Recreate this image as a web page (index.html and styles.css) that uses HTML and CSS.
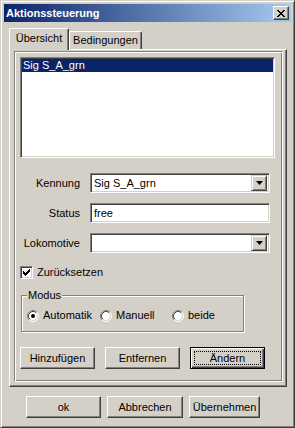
FILE: index.html
```html
<!DOCTYPE html>
<html lang="de">
<head>
  <meta charset="UTF-8" />
  <title>Aktionssteuerung</title>
  <link rel="stylesheet" href="styles.css">
</head>
<body>
  <div class="window">
    <div class="titlebar">
      <span class="title">Aktionssteuerung</span>
      <div class="close-btn">
        <svg width="8" height="7" viewBox="0 0 8 7">
          <path d="M0 0h2v1H0zM6 0h2v1H6zM1 1h2v1H1zM5 1h2v1H5zM2 2h4v1H2zM3 3h2v1H3zM2 4h4v1H2zM1 5h2v1H1zM5 5h2v1H5zM0 6h2v1H0zM6 6h2v1H6z" fill="#000"/>
        </svg>
      </div>
    </div>

    <div class="dialog-body">
      <div class="tabs">
        <div class="tab active">Übersicht</div>
        <div class="tab">Bedingungen</div>
      </div>

      <div class="tab-panel">
        <div class="frame">
          <div class="listbox">
            <div class="list-item selected">Sig S_A_grn</div>
          </div>

          <div class="form">
            <span class="field-label">Kennung</span>
            <div class="combo">
              <span class="combo-value">Sig S_A_grn</span>
              <span class="combo-btn">
                <svg width="7" height="4" viewBox="0 0 7 4"><path d="M0 0h7L3.5 4z" fill="#000"/></svg>
              </span>
            </div>

            <span class="field-label">Status</span>
            <div class="textbox">free</div>

            <span class="field-label">Lokomotive</span>
            <div class="combo">
              <span class="combo-value"></span>
              <span class="combo-btn">
                <svg width="7" height="4" viewBox="0 0 7 4"><path d="M0 0h7L3.5 4z" fill="#000"/></svg>
              </span>
            </div>
          </div>

          <div class="check-row">
            <span class="checkbox">
              <svg width="7" height="7" viewBox="0 0 7 7">
                <path d="M6 0h1v1H6zM5 1h2v1H5zM0 2h1v1H0zM4 2h3v1H4zM0 3h2v1H0zM3 3h3v1H3zM0 4h5v1H0zM1 5h3v1H1zM2 6h1v1H2z" fill="#000"/>
              </svg>
            </span>
            <span>Zurücksetzen</span>
          </div>

          <div class="groupbox">
            <div class="group-title">Modus</div>
            <div class="radio-row">
              <span class="radio-opt opt-auto">
                <svg class="radio" width="12" height="12" viewBox="0 0 12 12">
                  <circle cx="6" cy="6" r="5" fill="#fff"/>
                  <path d="M2.11 9.89A5.5 5.5 0 0 1 9.89 2.11" fill="none" stroke="#808080"/>
                  <path d="M9.89 2.11A5.5 5.5 0 0 1 2.11 9.89" fill="none" stroke="#fff"/>
                  <path d="M2.82 9.18A4.5 4.5 0 0 1 9.18 2.82" fill="none" stroke="#404040"/>
                  <path d="M9.18 2.82A4.5 4.5 0 0 1 2.82 9.18" fill="none" stroke="#d4d0c8"/>
                  <circle cx="6" cy="6" r="2" fill="#000"/>
                </svg>
                Automatik
              </span>
              <span class="radio-opt opt-manual">
                <svg class="radio" width="12" height="12" viewBox="0 0 12 12">
                  <circle cx="6" cy="6" r="5" fill="#fff"/>
                  <path d="M2.11 9.89A5.5 5.5 0 0 1 9.89 2.11" fill="none" stroke="#808080"/>
                  <path d="M9.89 2.11A5.5 5.5 0 0 1 2.11 9.89" fill="none" stroke="#fff"/>
                  <path d="M2.82 9.18A4.5 4.5 0 0 1 9.18 2.82" fill="none" stroke="#404040"/>
                  <path d="M9.18 2.82A4.5 4.5 0 0 1 2.82 9.18" fill="none" stroke="#d4d0c8"/>
                </svg>
                Manuell
              </span>
              <span class="radio-opt">
                <svg class="radio" width="12" height="12" viewBox="0 0 12 12">
                  <circle cx="6" cy="6" r="5" fill="#fff"/>
                  <path d="M2.11 9.89A5.5 5.5 0 0 1 9.89 2.11" fill="none" stroke="#808080"/>
                  <path d="M9.89 2.11A5.5 5.5 0 0 1 2.11 9.89" fill="none" stroke="#fff"/>
                  <path d="M2.82 9.18A4.5 4.5 0 0 1 9.18 2.82" fill="none" stroke="#404040"/>
                  <path d="M9.18 2.82A4.5 4.5 0 0 1 2.82 9.18" fill="none" stroke="#d4d0c8"/>
                </svg>
                beide
              </span>
            </div>
          </div>

          <div class="btn-row">
            <div class="btn">Hinzufügen</div>
            <div class="btn">Entfernen</div>
            <div class="btn default">Ändern</div>
          </div>
        </div>
      </div>

      <div class="dialog-buttons">
        <div class="btn btn-ok">ok</div>
        <div class="btn btn-cancel">Abbrechen</div>
        <div class="btn btn-apply">Übernehmen</div>
      </div>
    </div>
  </div>
</body>
</html>
```

FILE: styles.css
```css
* {
  box-sizing: border-box;
}

body {
  margin: 0;
  background: #d4d0c8;
  font-family: 'Liberation Sans', Arial, sans-serif;
  font-size: 11px;
  line-height: 13px;
  color: #000;
}

.window {
  width: 295px;
  height: 428px;
  padding: 3px;
  background: #d4d0c8;
  border: 1px solid;
  border-color: #d4d0c8 #404040 #404040 #d4d0c8;
  box-shadow: inset 1px 1px #fff, inset -1px -1px #808080;
}

/* title bar */
.titlebar {
  height: 18px;
  padding: 0 2px;
  background: linear-gradient(to right, #0a246a, #a6caf0);
  display: flex;
  align-items: center;
  justify-content: space-between;
}

.title {
  color: #fff;
  font-weight: bold;
}

.close-btn {
  width: 16px;
  height: 14px;
  background: #d4d0c8;
  border: 1px solid;
  border-color: #fff #404040 #404040 #fff;
  box-shadow: inset -1px -1px #808080;
  display: flex;
  align-items: center;
  justify-content: center;
}

.close-btn svg {
  display: block;
}

.dialog-body {
  padding: 6px 4px 0 5px;
}

/* tabs */
.tabs {
  display: flex;
  align-items: flex-end;
  height: 21px;
}

.tab {
  height: 18px;
  width: 73px;
  padding-top: 2px;
  text-align: center;
  background: #d4d0c8;
  border-top: 1px solid #fff;
  border-left: 1px solid #fff;
  border-right: 1px solid #404040;
  border-radius: 2px 2px 0 0;
  box-shadow: inset -1px 0 #808080;
}

.tab.active {
  width: 60px;
  height: 22px;
  padding-top: 3px;
  margin-bottom: -1px;
  position: relative;
  z-index: 1;
}

.tab-panel {
  height: 338px;
  border: 1px solid;
  border-color: #fff #404040 #404040 #fff;
  box-shadow: inset -1px -1px #808080;
  padding: 1px 3px 4px 4px;
}

.frame {
  height: 100%;
  border: 1px solid;
  border-color: #808080 #fff #fff #808080;
  box-shadow: inset 1px 1px #fff, inset -1px -1px #808080;
  padding: 5px 7px 0 5px;
}

/* sunken fields */
.listbox,
.combo,
.textbox,
.checkbox {
  background: #fff;
  border: 1px solid;
  border-color: #808080 #fff #fff #808080;
  box-shadow: inset 1px 1px #404040, inset -1px -1px #d4d0c8;
}

.listbox {
  height: 101px;
  padding: 1px;
}

.list-item {
  height: 13px;
  padding-left: 1px;
}

.list-item.selected {
  background: #0a246a;
  color: #fff;
}

.form {
  margin-top: 15px;
  display: grid;
  grid-template-columns: 60px 180px;
  grid-auto-rows: 20px;
  column-gap: 10px;
  row-gap: 10px;
}

.field-label {
  text-align: right;
  align-self: center;
}

.combo {
  display: flex;
  align-items: center;
  padding: 2px 2px 2px 3px;
}

.combo-value {
  flex: 1;
}

.combo-btn {
  width: 16px;
  height: 16px;
  background: #d4d0c8;
  border: 1px solid;
  border-color: #d4d0c8 #404040 #404040 #d4d0c8;
  box-shadow: inset 1px 1px #fff, inset -1px -1px #808080;
  display: flex;
  align-items: center;
  justify-content: center;
}

.combo-btn svg {
  display: block;
}

.textbox {
  padding: 3px 3px;
}

.check-row {
  margin-top: 13px;
  display: flex;
  align-items: center;
  gap: 4px;
}

.checkbox {
  width: 13px;
  height: 13px;
  display: flex;
  align-items: center;
  justify-content: center;
}

.checkbox svg {
  display: block;
}

/* Modus group */
.groupbox {
  width: 223px;
  height: 37px;
  margin: 16px 0 0 1px;
  border: 1px solid #808080;
  box-shadow: 1px 1px #fff, inset 1px 1px #fff;
  padding: 0 5px;
}

.group-title {
  width: fit-content;
  margin: -7px 0 0 0;
  padding: 0 1px;
  background: #d4d0c8;
}

.radio-row {
  margin-top: 7px;
  display: flex;
  align-items: center;
}

.radio-opt {
  display: flex;
  align-items: center;
  gap: 4px;
}

.radio {
  display: block;
}

.opt-auto {
  width: 73px;
}

.opt-manual {
  width: 72px;
}

/* buttons */
.btn {
  height: 22px;
  width: 75px;
  background: #d4d0c8;
  border: 1px solid;
  border-color: #fff #404040 #404040 #fff;
  box-shadow: inset -1px -1px #808080;
  display: flex;
  align-items: center;
  justify-content: center;
}

.btn.default {
  border-color: #000;
  box-shadow: inset 1px 1px #fff, inset -1px -1px #404040, inset -2px -2px #808080;
  position: relative;
}

.btn.default::after {
  content: '';
  position: absolute;
  inset: 3px;
  border: 1px dotted #000;
}

.btn-row {
  margin-top: 15px;
  display: flex;
  gap: 10px;
}

.dialog-buttons {
  margin: 9px 0 0 17px;
  display: flex;
  gap: 6px;
}

.btn-cancel {
  width: 76px;
}

.btn-apply {
  width: 71px;
}
```
